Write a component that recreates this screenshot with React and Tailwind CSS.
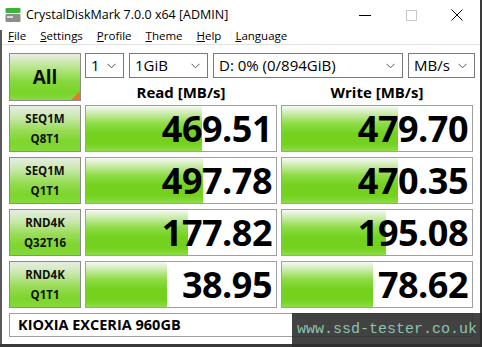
import React from "react";

// CrystalDiskMark 7 main window, default theme
const rows = [
  { a: "SEQ1M", b: "Q8T1", read: "469.51", write: "479.70", rw: "w-[116px]", ww: "w-[116px]" },
  { a: "SEQ1M", b: "Q1T1", read: "497.78", write: "470.35", rw: "w-[117px]", ww: "w-[116px]" },
  { a: "RND4K", b: "Q32T16", read: "177.82", write: "195.08", rw: "w-[102px]", ww: "w-[104px]" },
  { a: "RND4K", b: "Q1T1", read: "38.95", write: "78.62", rw: "w-[81px]", ww: "w-[91px]" },
];

const ui = { fontFamily: '"Open Sans", "Noto Sans", sans-serif' };

const AppIcon = () => (
  <svg width="16" height="15" viewBox="0 0 16 15">
    <rect x="0.5" y="0" width="15" height="5" rx="1" fill="#3cb43c" />
    <rect x="0.5" y="6" width="15" height="8" rx="1" fill="#8a8f8a" />
    <rect x="2" y="8" width="6" height="2" fill="#d8dcd8" />
  </svg>
);

const Chevron = () => (
  <svg width="9" height="6" viewBox="0 0 9 6" className="shrink-0">
    <path d="M0.5 0.8 L4.5 4.8 L8.5 0.8" fill="none" stroke="#555" strokeWidth="1" />
  </svg>
);

const Select = ({ w, children }) => (
  <div className={`${w} h-[25px] flex items-center justify-between border border-[#7a7a7a] bg-white pl-[5px] pr-[7px] text-[15px] text-black`}>
    <span className="leading-none">{children}</span>
    <Chevron />
  </div>
);

const Cell = ({ value, fill }) => (
  <div className="relative h-[47px] w-[192px] border border-[#a0a0a0] bg-white overflow-hidden">
    <div className={`absolute left-0 top-0 bottom-0 ${fill} bg-[linear-gradient(to_bottom,#f7f9f5_0%,#c7eba6_18%,#8fdc48_38%,#74d21f_60%,#74d21f_85%,#8edd48_100%)]`} />
    <div className="relative flex h-full items-center justify-end pr-[4px] text-[36px] font-bold leading-none text-black tracking-[-0.5px]">
      {value}
    </div>
  </div>
);

const Label = ({ a, b }) => (
  <div className="h-[47px] w-[72px] flex flex-col items-center justify-center gap-[9px] border border-[#8c8c8c] bg-[linear-gradient(to_bottom,#e6ede2_0%,#c9e8ac_25%,#97dc55_55%,#7dd52c_80%,#85d93a_100%)] text-[11.5px] font-bold leading-none text-[#111]">
    <span>{a}</span>
    <span>{b}</span>
  </div>
);

export default function App() {
  return (
    <div className="relative w-[482px] h-[347px] bg-[#3a3a3a] overflow-hidden" style={ui}>
      <div className="h-[344px] w-[480px] bg-white">
        {/* title bar */}
        <div className="flex h-[30px] items-center pl-[5px] pr-0">
          <AppIcon />
          <span className="ml-[5px] text-[12.5px] text-black">CrystalDiskMark 7.0.0 x64 [ADMIN]</span>
          <div className="ml-auto flex items-center">
            <div className="flex w-[46px] justify-center">
              <div className="h-px w-[12px] bg-black" />
            </div>
            <div className="flex w-[46px] justify-center">
              <div className="h-[11px] w-[11px] border border-[#c8c8c8]" />
            </div>
            <svg width="46" height="12" viewBox="0 0 46 12">
              <path d="M17.5 0.5 L28.5 11.5 M28.5 0.5 L17.5 11.5" stroke="#111" strokeWidth="1" />
            </svg>
          </div>
        </div>

        <div className="border-l-2 border-[#5a5a5a] h-[314px]">
          {/* menu */}
          <div className="flex h-[15px] items-start gap-[14px] pl-[6px] text-[11.5px] leading-none text-black border-b border-[#e2e2e2]">
            <span><u>F</u>ile</span>
            <span><u>S</u>ettings</span>
            <span><u>P</u>rofile</span>
            <span><u>T</u>heme</span>
            <span><u>H</u>elp</span>
            <span><u>L</u>anguage</span>
          </div>

          {/* content */}
          <div className="pl-[7px] pt-[8px]">
            <div className="flex gap-[4px]">
              <div className="relative h-[48px] w-[72px] flex items-center justify-center border border-[#8c8c8c] bg-[linear-gradient(to_bottom,#e8eee4_0%,#b8e58a_30%,#86d83c_60%,#78d428_85%,#8adb42_100%)] text-[19px] font-bold text-[#111]">
                All
                <div className="absolute bottom-0 right-0 h-0 w-0 border-l-[9px] border-b-[9px] border-l-transparent border-b-[#e8792a]" />
              </div>
              <div className="flex flex-col">
                <div className="flex gap-[5px]">
                  <Select w="w-[39px]">1</Select>
                  <Select w="w-[79px]">1GiB</Select>
                  <Select w="w-[190px]">D: 0% (0/894GiB)</Select>
                  <Select w="w-[67px]">MB/s</Select>
                </div>
                <div className="flex h-[23px] items-end gap-[4px] pb-[1px] text-[15px] font-bold leading-none text-black">
                  <div className="w-[192px] text-center">Read [MB/s]</div>
                  <div className="w-[192px] text-center">Write [MB/s]</div>
                </div>
              </div>
            </div>

            <div className="mt-[4px] flex flex-col gap-[5px]">
              {rows.map((r) => (
                <div key={r.a + r.b} className="flex gap-[4px]">
                  <Label a={r.a} b={r.b} />
                  <Cell value={r.read} fill={r.rw} />
                  <Cell value={r.write} fill={r.ww} />
                </div>
              ))}
            </div>

            <div className="mt-[5px] flex h-[24px] w-[464px] items-center border border-[#a0a0a0] bg-white pl-[8px] text-[14.5px] font-bold text-black">
              KIOXIA EXCERIA 960GB
            </div>
          </div>
        </div>
      </div>

      {/* watermark overlay */}
      <div className="absolute left-[292px] top-[313px] flex h-[34px] w-[190px] items-center justify-center bg-[#2e2e2e]/90 text-[15px] text-[#8cc2b0]" style={{ fontFamily: '"Liberation Mono", "DejaVu Sans Mono", monospace' }}>
        www.ssd-tester.co.uk
      </div>
    </div>
  );
}
